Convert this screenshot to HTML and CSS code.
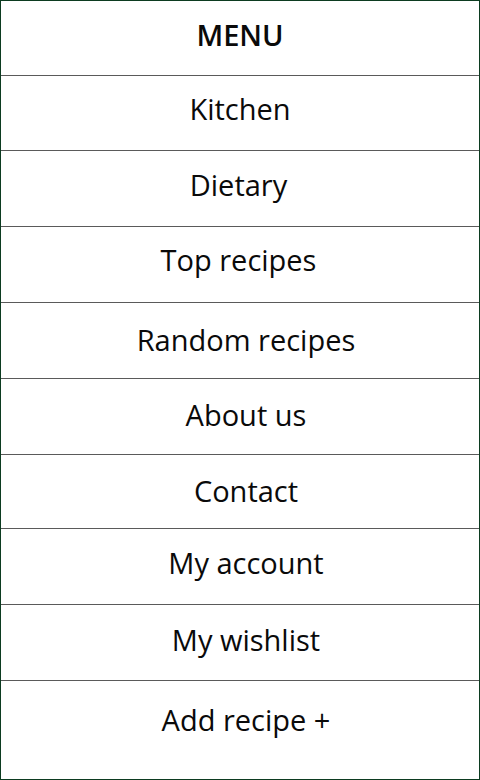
FILE: index.html
```html
<!DOCTYPE html>
<html lang="en">
<head>
<meta charset="utf-8">
<title>Menu</title>
<link rel="stylesheet" href="styles.css">
</head>
<body>
<nav class="menu">
  <ul class="menu-list">
    <li class="menu-item menu-title">MENU</li>
    <li class="menu-item">Kitchen</li>
    <li class="menu-item">Dietary</li>
    <li class="menu-item">Top recipes</li>
    <li class="menu-item">Random recipes</li>
    <li class="menu-item">About us</li>
    <li class="menu-item">Contact</li>
    <li class="menu-item">My account</li>
    <li class="menu-item">My wishlist</li>
    <li class="menu-item menu-last">Add recipe +</li>
  </ul>
</nav>
</body>
</html>
```
FILE: styles.css
```css
* { box-sizing: border-box; }
html, body { margin: 0; padding: 0; background: #fff; }
.menu {
  width: 480px;
  height: 780px;
  border: 1px solid #0c3b20;
  display: flex;
  flex-direction: column;
  font-family: "Open Sans", "Liberation Sans", sans-serif;
  color: #0a0a0a;
}
.menu-list {
  list-style: none;
  margin: 0;
  padding: 0;
  display: flex;
  flex-direction: column;
  flex: 1;
}
.menu-item {
  font-size: 29px;
  line-height: 38px;
  text-align: center;
  border-bottom: 1px solid #5a5a5a;
  padding-top: 15px;
  padding-left: 12px;
  height: 76px;
  flex: none;
}
.menu-title { font-weight: 600; padding-left: 0; height: 75px; padding-top: 15px; }
.menu-item:nth-child(2) { height: 75px; padding-top: 14px; padding-left: 0; }
.menu-item:nth-child(3) { padding-top: 15px; padding-left: 0; padding-right: 3px; }
.menu-item:nth-child(4) { padding-top: 14px; padding-left: 0; padding-right: 3px; }
.menu-item:nth-child(5) { padding-top: 18px; }
.menu-item:nth-child(6) { padding-top: 17px; }
.menu-item:nth-child(7) { height: 74px; padding-top: 17px; }
.menu-item:nth-child(8) { padding-top: 15px; }
.menu-item:nth-child(9) { padding-top: 16px; }
.menu-last { border-bottom: none; flex: 1; height: auto; padding-top: 20px; }
```
